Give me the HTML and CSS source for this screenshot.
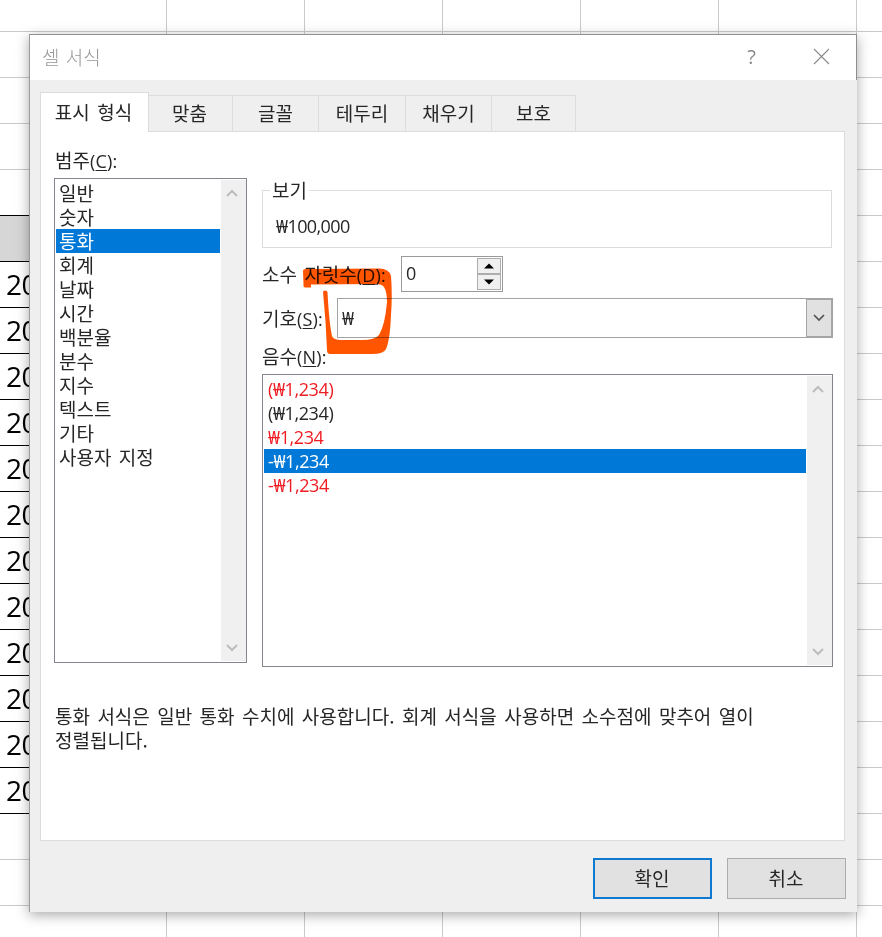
FILE: index.html
```
<!DOCTYPE html>
<html lang="ko">
<head>
<meta charset="utf-8">
<title>셀 서식</title>
<link rel="stylesheet" href="styles.css">
</head>
<body>
<div class="sheet">
  <div class="rows">
    <div class="cell head"></div>
    <div class="cell">20</div><div class="cell">20</div><div class="cell">20</div><div class="cell">20</div>
    <div class="cell">20</div><div class="cell">20</div><div class="cell">20</div><div class="cell">20</div>
    <div class="cell">20</div><div class="cell">20</div><div class="cell">20</div><div class="cell">20</div>
  </div>
  <div class="dialog">
    <header class="titlebar">
      <span class="title">셀 서식</span>
      <span class="help">?</span>
      <svg class="close" width="17" height="17" viewBox="0 0 17 17"><path d="M1 1L16 16M16 1L1 16"/></svg>
    </header>
    <nav class="tabs">
      <div class="tab active">표시 형식</div>
      <div class="tab t2">맞춤</div>
      <div class="tab t3">글꼴</div>
      <div class="tab t4">테두리</div>
      <div class="tab t5">채우기</div>
      <div class="tab t6">보호</div>
    </nav>
    <main class="panel">
      <div class="columns">
        <section class="left">
          <div class="label category">범주<span class="lat">(<u>C</u>):</span></div>
          <div class="list categories">
            <ul>
              <li>일반</li><li>숫자</li><li class="selected">통화</li><li>회계</li><li>날짜</li><li>시간</li>
              <li>백분율</li><li>분수</li><li>지수</li><li>텍스트</li><li>기타</li><li>사용자 지정</li>
            </ul>
            <div class="scroll">
              <svg width="12" height="8" viewBox="0 0 12 8"><path d="M1 7L6 2L11 7"/></svg>
              <svg width="12" height="8" viewBox="0 0 12 8"><path d="M1 1L6 6L11 1"/></svg>
            </div>
          </div>
        </section>
        <section class="right">
          <fieldset class="sample"><legend>보기</legend><div class="lat">₩100,000</div></fieldset>
          <div class="field decimals">
            <span class="label">소수 자릿수<span class="lat">(<u>D</u>):</span></span>
            <div class="spinner">
              <span class="lat">0</span>
              <div class="steps">
                <div class="step"><svg width="10" height="6" viewBox="0 0 10 6"><path d="M0 5.5L5 .5L10 5.5Z"/></svg></div>
                <div class="step"><svg width="10" height="6" viewBox="0 0 10 6"><path d="M0 .5L5 5.5L10 .5Z"/></svg></div>
              </div>
            </div>
          </div>
          <div class="field symbol">
            <span class="label">기호<span class="lat">(<u>S</u>):</span></span>
            <div class="combo">
              <span class="lat">₩</span>
              <div class="drop"><svg width="12" height="8" viewBox="0 0 12 8"><path d="M1 1L6 6L11 1"/></svg></div>
            </div>
          </div>
          <div class="label negative">음수<span class="lat">(<u>N</u>):</span></div>
          <div class="list negatives">
            <ul>
              <li class="red">(₩1,234)</li><li>(₩1,234)</li><li class="red">₩1,234</li>
              <li class="selected">-₩1,234</li><li class="red">-₩1,234</li>
            </ul>
            <div class="scroll">
              <svg width="12" height="8" viewBox="0 0 12 8"><path d="M1 7L6 2L11 7"/></svg>
              <svg width="12" height="8" viewBox="0 0 12 8"><path d="M1 1L6 6L11 1"/></svg>
            </div>
          </div>
        </section>
      </div>
      <p class="note">통화 서식은 일반 통화 수치에 사용합니다. 회계 서식을 사용하면 소수점에 맞추어 열이<br>정렬됩니다.</p>
    </main>
    <footer class="actions">
      <div class="button primary">확인</div>
      <div class="button">취소</div>
    </footer>
  </div>
  <svg class="marker" width="92" height="90" viewBox="302 266 92 90">
    <path d="M303 271Q303 269 306 269L378 268.5Q389 268 391 276Q392.5 296 391 315Q390 340 386 349Q384 354 372 354L330 354Q327 354 327 350Q326 322 323 292Q323 290.500 325 290.500Q327 290.500 327.500 292Q329 322 332 336Q333 339.500 340 340L362 340Q375 340 379 335Q385 325 387 302Q387 292 384 287Q382 284 376 284L311 284.500L311 287.500L305 287.500Q303 287.500 303.500 284Z"/>
  </svg>
</div>
</body>
</html>
```
FILE: styles.css
```
* { box-sizing: border-box; }
body {
  margin: 0;
  font: 19px/24px "Noto Sans CJK KR", sans-serif;
  color: #262626;
  word-spacing: 2.1px;
}
.sheet {
  position: relative;
  width: 882px;
  height: 937px;
  overflow: hidden;
  display: flow-root;
  background:
    repeating-linear-gradient(180deg, #cacaca 0 1px, transparent 1px 46px) 0 -15px / 100% 1104px,
    linear-gradient(#fff, #fff) 0 0 / 60px 100% no-repeat,
    repeating-linear-gradient(90deg, #cacaca 0 1px, transparent 1px 138px) 28px 0 / 1104px 100%,
    #fff;
}
.rows { position: absolute; left: 0; top: 215px; width: 60px; border-top: 1px solid #000; }
.cell {
  height: 46px;
  border-bottom: 1px solid #000;
  background: #fff;
  padding-left: 6px;
  font: 28px/44px "Open Sans", sans-serif;
  letter-spacing: -.5px;
  color: #000;
}
.head { background: #d6d6d6; }
.dialog {
  position: relative;
  width: 828px;
  height: 878px;
  margin: 34px 0 0 29px;
  background: #efefef;
  box-shadow: 0 3px 12px rgba(0,0,0,.34);
  border-left: 1px solid #9b9b9b;
  border-top: 1px solid #909090;
}
.titlebar {
  display: flex;
  align-items: center;
  height: 45px;
  padding: 0 26px 2px 12px;
  background: #fff;
  border-right: 1px solid #8f8f8f;
  color: #979797;
  font-weight: 300;
  word-spacing: 1px;
}
.title { flex: 1; }
.help { font: 20px/24px "Open Sans", sans-serif; color: #888; margin-right: 57px; }
.close path { stroke: #8a8a8a; stroke-width: 1.1; fill: none; }
.tabs { position: relative; z-index: 1; display: flex; align-items: flex-end; height: 52px; padding-left: 10px; }
.tab {
  height: 37px;
  line-height: 33px;
  border: 1px solid #dcdcdc;
  border-left: 0;
  text-align: center;
}
.active {
  width: 109px;
  height: 40px;
  padding-right: 2px;
  line-height: 37px;
  background: #fff;
  border-left: 1px solid #dcdcdc;
  border-bottom: 0;
}
.t2 { width: 84px; padding-right: 2px; }
.t3 { width: 86px; }
.t4 { width: 87px; }
.t5 { width: 86px; }
.t6 { width: 84px; }
.panel {
  width: 805px;
  height: 710px;
  margin: -1px 0 0 10px;
  padding: 0 11px 0 13px;
  background: #fff;
  border: 1px solid #dcdcdc;
}
.lat { font: 18px/24px "Open Sans", "Noto Sans", sans-serif; letter-spacing: -.6px; }
.label .lat { letter-spacing: .2px; }
u { text-underline-offset: 2px; text-decoration-thickness: 1px; }
.columns { display: flex; gap: 15px; height: 535px; }
.left { width: 193px; }
.right { width: 571px; }
.category { height: 46px; padding: 16px 0 0 1px; }
.list { display: flex; justify-content: space-between; border: 1px solid #82868c; background: #fff; }
.list ul { list-style: none; margin: 0; padding: 2px 0 0 1px; flex: 1; }
.list li { height: 24px; padding-left: 4px; white-space: nowrap; }
.list .selected { background: #0078d7; color: #fff; }
.scroll {
  width: 25px;
  margin: 1px 0 1px 1px;
  background: #f0f0f0;
  display: flex;
  flex-direction: column;
  align-items: center;
  justify-content: space-between;
  padding: 9px 3px 9px 0;
}
.scroll path { fill: none; stroke: #bdbdbd; stroke-width: 2; }
.categories { height: 485px; }
.categories li { line-height: 23px; padding-left: 3px; }
.sample {
  height: 70px;
  margin: 46px 1px 0 0;
  border: 1px solid #dcdcdc;
  padding: 0 0 0 13px;
}
.sample legend { padding: 0 2px; margin-left: -6px; height: 24px; line-height: 24px; }
.sample .lat { margin-top: 12px; }
.field { display: flex; align-items: center; }
.field .label { white-space: nowrap; }
.decimals { height: 36px; margin-top: 8px; }
.decimals .label { width: 139px; }
.spinner {
  width: 102px;
  height: 36px;
  border: 1px solid #9a9a9a;
  padding: 1px 1px 1px 4px;
  display: flex;
  justify-content: space-between;
}
.spinner .lat { line-height: 30px; }
.steps { width: 24px; display: flex; flex-direction: column; }
.step {
  flex: 1;
  display: flex;
  align-items: center;
  justify-content: center;
  background: #f0f0f0;
  border: 1px solid #adadad;
}
.step path { fill: #000; }
.symbol { height: 40px; margin-top: 6px; }
.symbol .label { width: 75px; }
.combo {
  flex: 1;
  height: 40px;
  border: 1px solid #a3a3a3;
  display: flex;
  justify-content: space-between;
  padding-left: 4px;
}
.combo .lat { line-height: 38px; }
.drop {
  width: 26px;
  display: flex;
  align-items: center;
  justify-content: center;
  background: #e1e1e1;
  border: 1px solid #a6a6a9;
}
.drop path { fill: none; stroke: #555; stroke-width: 1.7; }
.negative { height: 36px; padding-top: 6px; }
.negatives { height: 293px; font: 18px/24px "Open Sans", "Noto Sans", sans-serif; letter-spacing: -.4px; }
.list .red { color: #f01c22; }
.note { margin: 37px 0 0 1px; white-space: nowrap; }
.actions { display: flex; justify-content: flex-end; gap: 15px; padding: 17px 11px 0 0; }
.button {
  width: 119px;
  height: 41px;
  line-height: 38px;
  padding-right: 1px;
  text-align: center;
  background: #e1e1e1;
  border: 1px solid #adadad;
}
.primary { border: 2px solid #0f78d0; line-height: 36px; }
.marker { position: absolute; left: 302px; top: 266px; mix-blend-mode: multiply; }
.marker path { fill: #ff5500; }
```
